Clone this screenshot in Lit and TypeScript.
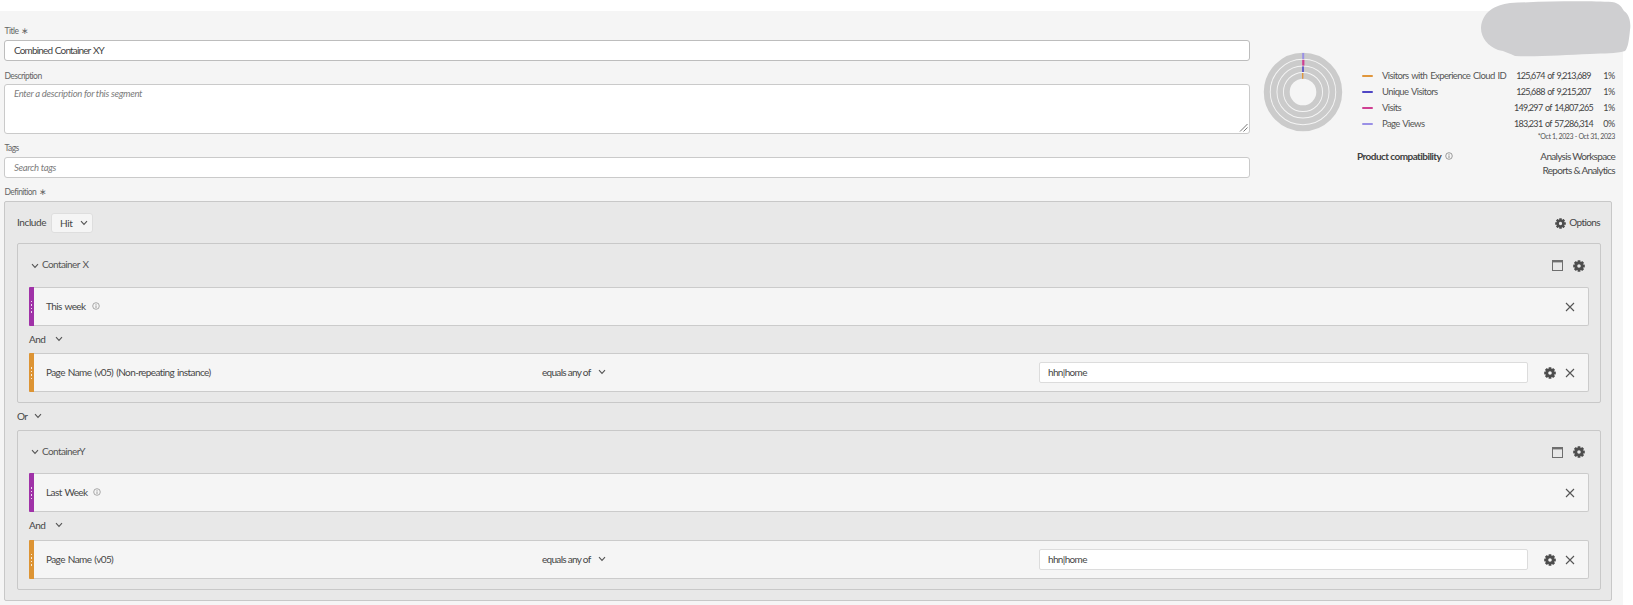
import { LitElement, html, css, svg } from "lit";
import { customElement } from "lit/decorators.js";

const chevron = html`<svg class="chev" viewBox="0 0 8 6"><polyline points="1,1.2 4,4.4 7,1.2" fill="none" stroke="currentColor" stroke-width="1.1"/></svg>`;
const close = html`<svg class="x" viewBox="0 0 10 10"><path d="M1 1L9 9M9 1L1 9" fill="none" stroke="currentColor" stroke-width="1.1"/></svg>`;
const info = html`<svg class="info" viewBox="0 0 8 8"><circle cx="4" cy="4" r="3.3" fill="none" stroke="currentColor" stroke-width=".7"/><path d="M4 3.4V6M4 2V2.8" stroke="currentColor" stroke-width=".8"/></svg>`;
const gear = html`<svg class="gear" viewBox="0 0 12 12">
  ${[0, 45, 90, 135, 180, 225, 270, 315].map((a) => svg`<rect x="4.6" y="0.2" width="2.8" height="2.6" rx=".4" fill="currentColor" transform="rotate(${a} 6 6)"/>`)}
  <circle cx="6" cy="6" r="3.1" fill="none" stroke="currentColor" stroke-width="2.6"/>
</svg>`;
const win = html`<svg class="win" viewBox="0 0 11 11"><rect x=".5" y=".8" width="10" height="9.7" fill="none" stroke="currentColor" stroke-width="1"/><rect x="0" y="0" width="11" height="2.4" fill="currentColor"/></svg>`;

const legend = [
  ["#e0963c", "Visitors with Experience Cloud ID", "125,674 of 9,213,689", "1%"],
  ["#4f46c4", "Unique Visitors", "125,688 of 9,215,207", "1%"],
  ["#cf3f92", "Visits", "149,297 of 14,807,265", "1%"],
  ["#9a90e6", "Page Views", "183,231 of 57,286,314", "0%"],
];

@customElement("app-root")
export class AppRoot extends LitElement {
  static styles = css`
    :host { display: block; height: 605px; overflow: hidden; background: #fff; position: relative;
      font-family: "Lato", "Liberation Sans", sans-serif; color: #464646; font-size: 10px; letter-spacing: -.6px; word-spacing: 1px; }
    * { box-sizing: border-box; }
    .panel { margin: 11px 10px 0 0; height: 594px; background: #f5f5f5; padding: 14px 11px 0 4px; }
    .top { display: flex; }
    .form { width: 1246px; flex: none; }
    .label { display: block; height: 12px; line-height: 12px; font-size: 8.5px; color: #666; margin-bottom: 3px; letter-spacing: -.55px; padding-left: .5px; }
    .label.tight { margin-bottom: 2px; }
    .input { height: 21px; background: #fff; border: 1px solid #cacaca; border-radius: 3px; padding: 0 0 1px 9px;
      display: flex; align-items: center; font-size: 10px; margin-bottom: 8px; color: #444; letter-spacing: -.85px; }
    .input.strong { border-color: #bdbdbd; margin-bottom: 9px; }
    .input.area { height: 50px; align-items: flex-start; padding-top: 3px; position: relative; margin-bottom: 8px; }
    .ph { font-style: italic; color: #7c7c7c; font-size: 9.5px; letter-spacing: -.3px; word-spacing: 0; }
    .grip { position: absolute; right: 1px; bottom: 1px; width: 9px; height: 9px; }
    .summary { flex: 1; display: flex; padding-left: 13px; }
    .donut { width: 80px; height: 80px; margin-top: 27px; flex: none; }
    .side { margin: 43px 0 0 19px; width: 253px; }
    .lrow { display: grid; grid-template-columns: 20px 128px 87px 18px; height: 16px; line-height: 16px; align-items: center; font-size: 9.5px; white-space: nowrap; }
    .swatch { width: 11px; height: 2.5px; border-radius: 1px; }
    .lname { color: #555; letter-spacing: -.6px; }
    .lnum { text-align: center; color: #444; font-size: 9px; letter-spacing: -.7px; }
    .lpct { text-align: right; font-size: 9px; letter-spacing: -.3px; }
    .date { height: 9px; line-height: 9px; font-size: 7px; text-align: right; color: #555; letter-spacing: -.36px; word-spacing: 0; }
    .compat { display: flex; justify-content: space-between; margin: 8px 0 0 -5px; line-height: 14px; font-size: 10px; }
    .compat b { font-weight: 700; color: #3f3f3f; letter-spacing: -.55px; word-spacing: 0; }
    .compat .info { margin-left: 4px; width: 8px; height: 8px; color: #777; vertical-align: 0; }
    .apps { text-align: right; color: #4b4b4b; letter-spacing: -.7px; word-spacing: 0; }
    .def { height: 400px; width: 1608px; background: #e8e8e8; border: 1px solid #c8c8c8; border-radius: 2px; padding: 11px 10px 10px 12px; }
    .include { display: flex; align-items: center; height: 20px; margin-bottom: 10px; letter-spacing: -.4px; }
    .include > span { padding-bottom: 2px; }
    .hit { width: 42px; height: 20px; margin-left: 5px; background: #f5f5f5; border: 1px solid #dedede; border-radius: 3px;
      display: flex; align-items: center; padding: 0 0 1px 8px; gap: 8px; }
    .options { margin-left: auto; display: flex; align-items: center; gap: 3px; margin-right: 1px; letter-spacing: -.6px; }
    .options span { padding-bottom: 2px; }
    .options .gear { width: 11px; height: 11px; }
    .box { background: #e8e8e8; border: 1px solid #c8c8c8; border-radius: 2px; padding: 0 11px 10px 11px; }
    .head { height: 43px; display: flex; align-items: center; margin: 0 4px 0 2px; color: #555; }
    .head span { padding-bottom: 3px; }
    .head.short { height: 42px; }
    .head .chev { margin-right: 3px; }
    .head .win { margin-left: auto; margin-right: 10px; }
    .rule { height: 39px; background: #f5f5f5; border: 1px solid #cbcbcb; border-left: none; border-radius: 2px; display: flex; align-items: center; }
    .bar { width: 5px; height: 39px; flex: none; display: flex; align-items: center; justify-content: center; border-radius: 1px 0 0 1px; }
    .bar i { display: block; width: 1.5px; height: 12px; background: repeating-linear-gradient(#fff 0 1.5px, transparent 1.5px 3.5px); opacity: .8; }
    .purple { background: #a032a8; }
    .orange { background: #dd9434; }
    .name { width: 508px; padding: 0 0 2px 12px; flex: none; display: flex; align-items: center; gap: 6px; color: #474747; }
    .name .info { color: #888; width: 8px; height: 8px; }
    .op { width: 497px; flex: none; display: flex; align-items: center; gap: 7px; padding-bottom: 2px; letter-spacing: -.7px; word-spacing: 0; }
    .value { width: 489px; height: 21px; flex: none; background: #fff; border: 1px solid #dcdcdc; border-radius: 2px; display: flex; align-items: center; padding: 0 0 2px 8px; letter-spacing: -.65px; }
    .acts { margin-left: auto; display: flex; align-items: center; gap: 9px; padding-right: 13px; color: #555; }
    .and { height: 27px; display: flex; align-items: center; gap: 10px; padding-bottom: 2px; }
    .and.tall { height: 28px; padding-bottom: 3px; }
    .or { height: 27px; display: flex; align-items: center; gap: 7px; padding-bottom: 1px; }
    .chev { width: 8px; height: 6px; color: #555; flex: none; }
    .x { width: 10px; height: 10px; color: #555; flex: none; }
    .gear { width: 12px; height: 12px; color: #4d4d4d; flex: none; }
    .win { width: 11px; height: 11px; color: #6e6e6e; flex: none; }
    .blob { position: absolute; left: 0; top: 0; width: 1633px; height: 605px; pointer-events: none; }
  `;

  rule(color: string, name: unknown, op?: string, value?: string) {
    return html`<div class="rule">
      <div class="bar ${color}"><i></i></div>
      <div class="name">${name}</div>
      ${op ? html`<div class="op">${op} ${chevron}</div><div class="value">${value}</div>` : ""}
      <div class="acts">${op ? gear : ""}${close}</div>
    </div>`;
  }

  render() {
    return html`
      <div class="panel">
        <div class="top">
          <div class="form">
            <label class="label">Title ∗</label>
            <div class="input strong">Combined Container XY</div>
            <label class="label tight">Description</label>
            <div class="input area"><span class="ph">Enter a description for this segment</span>
              <svg class="grip" viewBox="0 0 9 9"><path d="M1 8.5L8.5 1M4.5 8.5L8.5 4.5" stroke="#555" stroke-width=".8"/></svg>
            </div>
            <label class="label">Tags</label>
            <div class="input"><span class="ph">Search tags</span></div>
          </div>
          <div class="summary">
            <svg class="donut" viewBox="0 0 80 80">
              <g fill="none" stroke="#cbcbcb">
                <circle cx="40" cy="40" r="36.2" stroke-width="6"/>
                <circle cx="40" cy="40" r="29.4" stroke-width="5.8"/>
                <circle cx="40" cy="40" r="22.8" stroke-width="5.6"/>
                <circle cx="40" cy="40" r="16.2" stroke-width="5.8"/>
              </g>
              <rect x="39.2" y="1" width="2" height="6" fill="#9a90e6"/>
              <rect x="39.2" y="7.8" width="2.2" height="5.8" fill="#cf3f92"/>
              <rect x="39.2" y="14.4" width="1.6" height="5.6" fill="#4f46c4"/>
              <rect x="39" y="21" width="1.4" height="5.8" fill="#e0963c"/>
            </svg>
            <div class="side">
              ${legend.map(
                ([c, n, v, p]) => html`<div class="lrow">
                  <span class="swatch" style="background:${c}"></span>
                  <span class="lname">${n}</span>
                  <span class="lnum">${v}</span>
                  <span class="lpct">${p}</span>
                </div>`
              )}
              <div class="date">*Oct 1, 2023 - Oct 31, 2023</div>
              <div class="compat">
                <div><b>Product compatibility</b>${info}</div>
                <div class="apps">Analysis Workspace<br />Reports &amp; Analytics</div>
              </div>
            </div>
          </div>
        </div>
        <label class="label">Definition ∗</label>
        <div class="def">
          <div class="include">
            <span>Include</span>
            <div class="hit">Hit ${chevron}</div>
            <div class="options">${gear}<span>Options</span></div>
          </div>
          <div class="box">
            <div class="head">${chevron}<span>Container X</span>${win}${gear}</div>
            ${this.rule("purple", html`This week ${info}`)}
            <div class="and">And ${chevron}</div>
            ${this.rule("orange", "Page Name (v05) (Non-repeating instance)", "equals any of", "hhn|home")}
          </div>
          <div class="or">Or ${chevron}</div>
          <div class="box">
            <div class="head short">${chevron}<span>ContainerY</span>${win}${gear}</div>
            ${this.rule("purple", html`Last Week ${info}`)}
            <div class="and tall">And ${chevron}</div>
            ${this.rule("orange", "Page Name (v05)", "equals any of", "hhn|home")}
          </div>
        </div>
      </div>
      <svg class="blob" viewBox="0 0 1633 605">
        <path fill="#cfcfd1" d="M1481 28C1482 12 1495 5 1510 3C1550 1 1590 1 1612 2C1620 3 1622 8 1624 11C1630 15 1631 24 1630 30C1629 40 1628 48 1625 51C1615 54 1605 53 1590 54C1565 55 1535 57 1515 56C1510 54 1505 51 1498 50C1488 46 1481 38 1481 28Z"/>
      </svg>
    `;
  }
}
